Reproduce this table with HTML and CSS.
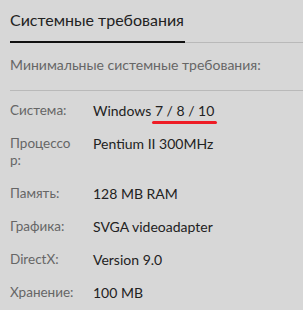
FILE: index.html
```html
<!DOCTYPE html>
<html lang="ru">
<head>
<meta charset="utf-8">
<link rel="stylesheet" href="styles.css">
</head>
<body>
<section class="panel">
  <div class="tabs">
    <h2 class="tab tab-active">Системные требования</h2>
  </div>
  <p class="subtitle">Минимальные системные требования:</p>
  <dl class="specs">
    <div class="spec"><dt>Система:</dt><dd>Windows <span class="mark">7 / 8 / 10</span></dd></div>
    <div class="spec"><dt>Процессор:</dt><dd>Pentium II 300MHz</dd></div>
    <div class="spec"><dt>Память:</dt><dd>128 MB RAM</dd></div>
    <div class="spec"><dt>Графика:</dt><dd>SVGA videoadapter</dd></div>
    <div class="spec"><dt>DirectX:</dt><dd>Version 9.0</dd></div>
    <div class="spec"><dt>Хранение:</dt><dd>100 MB</dd></div>
  </dl>
</section>
</body>
</html>
```
FILE: styles.css
```css
html, body {
  margin: 0;
  padding: 0;
  background: #d7d7d7;
}

body {
  font-family: Lato, "Noto Sans", sans-serif;
  color: #222;
}

.panel {
  padding: 0 0 0 10px;
}

.tabs {
  display: flex;
  border-bottom: 1px solid #b9b9b9;
  padding-top: 9px;
}

.tab {
  margin: 0;
  font-size: 16px;
  font-weight: 400;
  line-height: 22px;
  color: #222;
  width: 175px;
  padding-bottom: 10px;
  border-bottom: 2px solid #111;
  margin-bottom: -1px;
}

.subtitle {
  margin: 0;
  padding: 13px 0 16px;
  font-size: 14px;
  line-height: 18px;
  color: #666;
  border-bottom: 1px solid #b9b9b9;
}

.specs {
  margin: 0;
  padding-top: 3px;
}

.spec {
  display: grid;
  grid-template-columns: 66px 1fr;
  column-gap: 17px;
  padding: 8px 0;
  font-size: 14px;
  line-height: 17px;
}

.spec dt {
  color: #666;
  font-size: 13.5px;
  word-break: break-all;
}

.spec dd {
  margin: 0;
  color: #222;
}

.mark {
  position: relative;
}

/* red marker stroke under the version numbers */
.mark::after {
  content: "";
  position: absolute;
  left: -3px;
  right: -3px;
  bottom: -5px;
  height: 3px;
  border-radius: 2px;
  background: #ee1c25;
}
```
